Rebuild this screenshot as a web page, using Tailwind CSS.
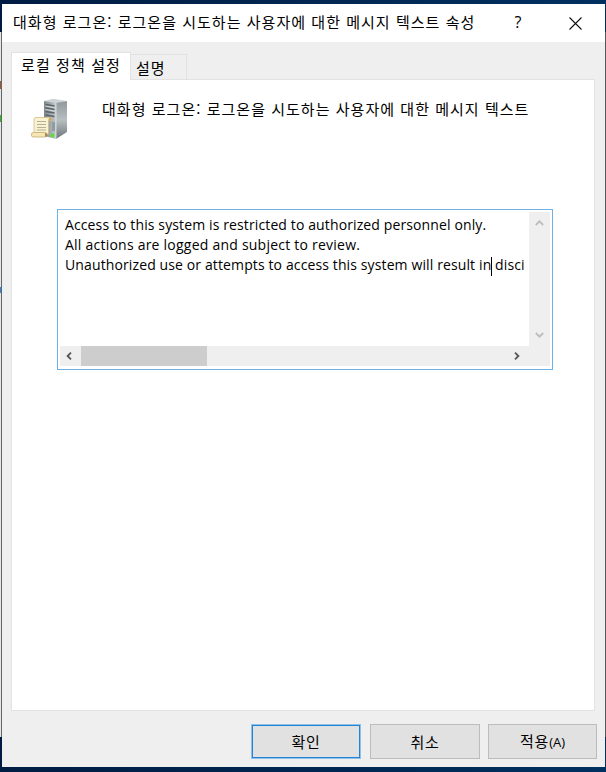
<!DOCTYPE html>
<html lang="ko">
<head>
    <meta charset="UTF-8">
    <meta name="viewport" content="width=device-width, initial-scale=1.0">
    <title>대화형 로그온: 로그온을 시도하는 사용자에 대한 메시지 텍스트 속성</title>
    <script src="https://cdn.jsdelivr.net/npm/@tailwindcss/browser@4"></script>
</head>
<body class="w-[606px] h-[772px] overflow-hidden bg-linear-to-r from-[#001c42] to-[#003060] font-['Noto_Sans_CJK_KR',sans-serif] text-black flex flex-col pt-1 pb-[5px]">
    <div class="flex flex-1 relative">
        <!-- Window behind, left edge -->
        <div class="w-[2px] pt-7 pb-[30px] flex">
            <div class="w-px bg-[#e4e7ea]"></div>
            <div class="w-px bg-[#62666a]"></div>
        </div>
        <div class="absolute left-0 top-[77px] w-px h-2 bg-[#a05a2c]"></div>
        <div class="absolute left-0 top-[111px] w-px h-[7px] bg-[#35b81c]"></div>
        <div class="absolute left-0 top-[283px] w-px h-[6px] bg-[#2f87d0]"></div>

        <!-- Dialog -->
        <main class="w-[603px] bg-[#efefef] flex flex-col">
            <header class="h-[38px] bg-white flex items-center pl-[11px]">
                <h1 class="w-[499px] pb-[3px] text-[15px] leading-none tracking-[1.03px] whitespace-nowrap">대화형 로그온: 로그온을 시도하는 사용자에 대한 메시지 텍스트 속성</h1>
                <button class="w-3 pb-[2px] text-[16px] leading-none font-['Open_Sans',sans-serif]" aria-label="도움말">?</button>
                <button class="ml-[45px]" aria-label="닫기">
                    <svg class="block" width="13" height="13" viewBox="0 0 13 13" fill="none" stroke="#111" stroke-width="1.1"><path d="M.5.5l12 12M12.5.5l-12 12"/></svg>
                </button>
            </header>

            <!-- Tabs -->
            <nav class="flex items-end h-[37px] pl-[9px]">
                <div class="w-[120px] h-[28px] -mb-px bg-white border border-b-0 border-[#e2e2e2] pl-[9px] text-[15px] leading-[24px] whitespace-nowrap tracking-[1.1px] z-10">로컬 정책 설정</div>
                <div class="w-[56px] h-[25px] border border-b-0 border-l-0 border-[#e2e2e2] pl-[5px] text-[15px] leading-[25px] tracking-[1px] whitespace-nowrap">설명</div>
            </nav>

            <section class="ml-[9px] w-[584px] h-[632px] bg-white border border-[#e2e2e2]">
                <div class="flex h-[129px] pt-[18px] pl-[18px]">
                    <!-- Server and scroll -->
                    <svg class="block" width="40" height="42" viewBox="0 0 40 42">
                        <defs>
                            <linearGradient id="front" x1="0" x2="1"><stop offset="0" stop-color="#7f878b"/><stop offset="1" stop-color="#c3cacd"/></linearGradient>
                            <linearGradient id="side" x1="0" y1="0" x2="0" y2="1"><stop offset="0" stop-color="#8f989b"/><stop offset=".5" stop-color="#b7bfc1"/><stop offset="1" stop-color="#6c7578"/></linearGradient>
                        </defs>
                        <path d="M14 3L23 .8L37 3L26 6Z" fill="#cdd3d5"/>
                        <path d="M14 3L26 5V41L14 38Z" fill="url(#front)"/>
                        <path d="M26 5L37 3V34L26 41Z" fill="url(#side)"/>
                        <path d="M26 5V41" stroke="#e3e8e9" stroke-width=".8"/>
                        <path d="M15.5 6.5L24.5 8M15.5 10L24.5 11.5M15.5 13.5L24.5 15M15.5 17L24.5 18.5" stroke="#596267" stroke-width="1.3"/>
                        <path d="M15.5 8L24.5 9.5M15.5 11.5L24.5 13" stroke="#dce1e3" stroke-width=".8"/>
                        <path d="M22 24h3v9h-3z" fill="#929b9e"/>
                        <circle cx="22.5" cy="37.5" r="2" fill="#5fe02b"/>
                        <path d="M4 21Q4 19.5 6 19.5H20.5Q22 20 21.5 22.5H18.5V36H4Z" fill="#faf1cf" stroke="#d3bc88" stroke-width=".8"/>
                        <path d="M18.5 22.5V21Q19 19.5 20.5 19.5Q22 20 21.5 22.5Z" fill="#c9a965"/>
                        <path d="M7 23.5h9M7 26.5h9M7 29.5h9M7 32h9" stroke="#b5ae9c" stroke-width="1"/>
                        <rect x="1.4" y="34.5" width="15" height="4.5" rx="2" fill="#f6e6b2" stroke="#c4aa72" stroke-width=".8"/>
                        <path d="M15 34.8h1.5q1 2 0 4h-1.5z" fill="#a98b4b"/>
                    </svg>
                    <p class="ml-[32px] mt-px text-[15px] leading-5 tracking-[1.03px] whitespace-nowrap">대화형 로그온: 로그온을 시도하는 사용자에 대한 메시지 텍스트</p>
                </div>

                <!-- Text area -->
                <div class="ml-[45px] w-[496px] h-[161px] border border-[#6eb1e2] p-[2px] flex flex-col">
                    <div class="flex h-[134px]">
                        <div class="w-[469px] pt-[3px] pl-[5px] font-['Open_Sans','Noto_Sans_CJK_KR',sans-serif] text-[14px] leading-5 whitespace-nowrap">
                            <p class="tracking-[0.12px]">Access to this system is restricted to authorized personnel only.</p>
                            <p class="tracking-[0.23px]">All actions are logged and subject to review.</p>
                            <p class="tracking-[0.12px]">Unauthorized use or attempts to access this system will result in<span class="inline-block w-px h-[19px] -mr-px bg-black align-middle"></span> disci</p>
                        </div>
                        <div class="w-[21px] bg-[#efefef] flex flex-col items-center pt-2 pb-2 justify-between">
                            <svg width="9" height="6" viewBox="0 0 9 6" fill="none" stroke="#bdbdbd" stroke-width="1.8"><path d="M.8 5L4.5 1.3L8.2 5"/></svg>
                            <svg width="9" height="6" viewBox="0 0 9 6" fill="none" stroke="#bdbdbd" stroke-width="1.8"><path d="M.8 1L4.5 4.7L8.2 1"/></svg>
                        </div>
                    </div>
                    <div class="h-[20px] w-[490px] bg-[#efefef] flex items-center">
                        <svg class="ml-[6px]" width="6" height="8" viewBox="0 0 6 8" fill="none" stroke="#555" stroke-width="1.8"><path d="M5 .7L1.6 4L5 7.3"/></svg>
                        <div class="ml-[9px] w-[126px] h-[20px] bg-[#cdcdcd]"></div>
                        <svg class="ml-[307px]" width="6" height="8" viewBox="0 0 6 8" fill="none" stroke="#555" stroke-width="1.8"><path d="M1 .7L4.4 4L1 7.3"/></svg>
                    </div>
                </div>
            </section>

            <footer class="flex mt-[13px] ml-[249px] gap-[9px] text-[15px] leading-none">
                <button class="w-[110px] h-[35px] bg-[#e1e1e1] border border-[#8fc0e8] inset-ring inset-ring-[#2383d4] pb-px tracking-[0.8px]">확인</button>
                <button class="w-[110px] h-[35px] bg-[#e1e1e1] border border-[#bcbcbc] pb-px tracking-[0.8px]">취소</button>
                <button class="w-[109px] -ml-px h-[35px] bg-[#e1e1e1] border border-[#bcbcbc] pb-px tracking-[0.8px]">적용<span class="text-[13px] tracking-normal font-['Open_Sans',sans-serif]">(A)</span></button>
            </footer>
        </main>
        <div class="w-px pt-7 pb-[30px] flex"><div class="w-px bg-[#55585c]"></div></div>
    </div>
</body>
</html>
